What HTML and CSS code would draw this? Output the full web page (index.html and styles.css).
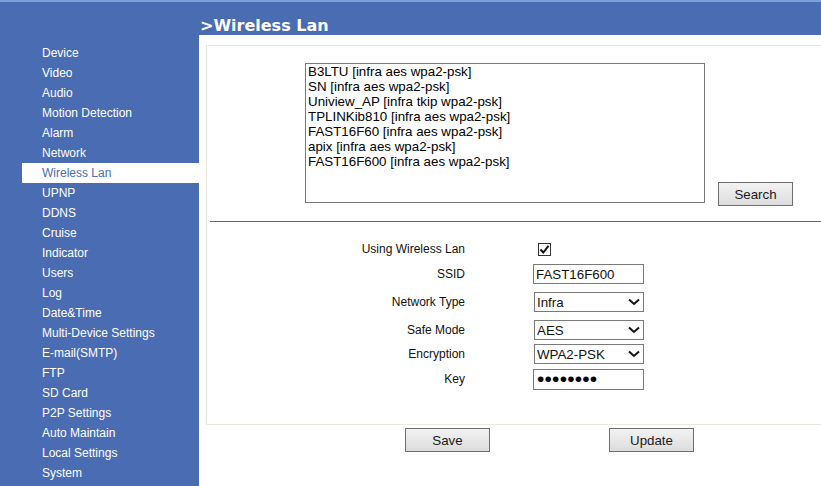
FILE: index.html
```html
<!DOCTYPE html>
<html lang="en">
<head>
<meta charset="utf-8">
<title>Wireless Lan</title>
<link rel="stylesheet" href="styles.css">
</head>
<body>
<div class="app">
  <header class="topbar">
    <h1 class="page-title">&gt;Wireless Lan</h1>
  </header>
  <div class="layout">
    <nav class="sidebar">
      <a class="nav-item">Device</a>
      <a class="nav-item">Video</a>
      <a class="nav-item">Audio</a>
      <a class="nav-item">Motion Detection</a>
      <a class="nav-item">Alarm</a>
      <a class="nav-item">Network</a>
      <a class="nav-item active">Wireless Lan</a>
      <a class="nav-item">UPNP</a>
      <a class="nav-item">DDNS</a>
      <a class="nav-item">Cruise</a>
      <a class="nav-item">Indicator</a>
      <a class="nav-item">Users</a>
      <a class="nav-item">Log</a>
      <a class="nav-item">Date&amp;Time</a>
      <a class="nav-item">Multi-Device Settings</a>
      <a class="nav-item">E-mail(SMTP)</a>
      <a class="nav-item">FTP</a>
      <a class="nav-item">SD Card</a>
      <a class="nav-item">P2P Settings</a>
      <a class="nav-item">Auto Maintain</a>
      <a class="nav-item">Local Settings</a>
      <a class="nav-item">System</a>
    </nav>
    <main class="content">
      <section class="panel">
        <div class="scan-row">
          <div class="ap-list">
            <div class="ap">B3LTU [infra aes wpa2-psk]</div>
            <div class="ap">SN [infra aes wpa2-psk]</div>
            <div class="ap">Uniview_AP [infra tkip wpa2-psk]</div>
            <div class="ap">TPLINKib810 [infra aes wpa2-psk]</div>
            <div class="ap">FAST16F60 [infra aes wpa2-psk]</div>
            <div class="ap">apix [infra aes wpa2-psk]</div>
            <div class="ap">FAST16F600 [infra aes wpa2-psk]</div>
          </div>
          <button class="btn btn-search">Search</button>
        </div>
        <hr class="divider">
        <div class="form">
          <div class="label">Using Wireless Lan</div>
          <div class="ctrl"><span class="check"><svg width="11" height="11" viewBox="0 0 11 11"><path d="M1.5 5.5 L4.3 8.5 L9.5 1.8" fill="none" stroke="#111" stroke-width="2"/></svg></span></div>

          <div class="label">SSID</div>
          <div class="ctrl"><input class="field" type="text" value="FAST16F600"></div>

          <div class="label">Network Type</div>
          <div class="ctrl"><div class="select-wrap"><select class="select"><option>Infra</option></select><svg class="chev" width="12" height="8" viewBox="0 0 12 8"><path d="M1 1.5 L6 6 L11 1.5" fill="none" stroke="#111" stroke-width="2"/></svg></div></div>

          <div class="label">Safe Mode</div>
          <div class="ctrl"><div class="select-wrap"><select class="select"><option>AES</option></select><svg class="chev" width="12" height="8" viewBox="0 0 12 8"><path d="M1 1.5 L6 6 L11 1.5" fill="none" stroke="#111" stroke-width="2"/></svg></div></div>

          <div class="label">Encryption</div>
          <div class="ctrl"><div class="select-wrap"><select class="select"><option>WPA2-PSK</option></select><svg class="chev" width="12" height="8" viewBox="0 0 12 8"><path d="M1 1.5 L6 6 L11 1.5" fill="none" stroke="#111" stroke-width="2"/></svg></div></div>

          <div class="label">Key</div>
          <div class="ctrl"><input class="field key" type="password" value="12345678"></div>
        </div>
      </section>
      <div class="actions">
        <button class="btn btn-action">Save</button>
        <button class="btn btn-action">Update</button>
      </div>
    </main>
  </div>
</div>
</body>
</html>
```

FILE: styles.css
```css
* { box-sizing: border-box; }

html, body {
  margin: 0;
  padding: 0;
  height: 100%;
  overflow: hidden;
  font-family: "Liberation Sans", Arial, sans-serif;
}

.app {
  display: flex;
  flex-direction: column;
  height: 100vh;
  background: #fff;
}

.topbar {
  height: 35px;
  flex: none;
  background: #4a6cb3;
  border-top: 2px solid #7e9ddb;
  display: flex;
  align-items: flex-end;
  padding-left: 200px;
}

.page-title {
  margin: 0;
  font-family: "DejaVu Sans", Verdana, sans-serif;
  font-weight: bold;
  font-size: 16px;
  line-height: 19px;
  color: #fff;
}

.layout {
  flex: 1;
  display: flex;
  min-height: 0;
}

.sidebar {
  width: 199px;
  flex: none;
  background: #4a6cb3;
  padding-top: 8px;
  display: flex;
  flex-direction: column;
}

.nav-item {
  display: block;
  height: 20px;
  line-height: 20px;
  margin-left: 22px;
  padding-left: 20px;
  font-size: 12px;
  color: #fff;
  white-space: nowrap;
}

.nav-item.active {
  background: #fff;
  color: #4a6cb3;
}

.content {
  flex: 1;
  min-width: 0;
  background: #fff;
  padding-top: 10px;
  padding-left: 7px;
}

.panel {
  border: 1px solid #ebe8d6;
  border-right: 0;
  height: 380px;
  display: flex;
  flex-direction: column;
}

.scan-row {
  display: flex;
  padding-left: 98px;
  padding-top: 17px;
}

.ap-list {
  width: 400px;
  height: 140px;
  border: 1px solid #7a7a7a;
  padding-left: 2px;
  font-size: 13.3333px;
  line-height: 15px;
  color: #000;
  background: #fff;
}

.btn {
  font-family: "Liberation Sans", Arial, sans-serif;
  font-size: 13.3333px;
  color: #1a1a1a;
  border: 1px solid #707070;
  border-radius: 0;
  background: linear-gradient(#f2f2f2, #dddddd);
  padding: 0;
}

.btn-search {
  width: 75px;
  height: 24px;
  margin-left: 13px;
  margin-top: 119px;
}

.divider {
  border: 0;
  border-top: 1px solid #52699e;
  margin: 15px 0 0 3px;
  height: 0;
}

.form {
  display: grid;
  grid-template-columns: 258px 1fr;
  grid-template-rows: 24px 26px 30px 26px 22px 28px;
  column-gap: 68px;
  margin-top: 15px;
  font-size: 12px;
  color: #111;
}

.label {
  display: flex;
  align-items: center;
  justify-content: flex-end;
  text-align: right;
}

.ctrl {
  display: flex;
  align-items: center;
}

.check {
  width: 13px;
  height: 13px;
  margin-left: 5px;
  border: 1px solid #333;
  display: flex;
  align-items: center;
  justify-content: center;
  background: #fff;
}

.field {
  width: 111px;
  height: 20px;
  border: 1px solid #7a7a7a;
  padding: 0 2px;
  font-family: "Liberation Sans", Arial, sans-serif;
  font-size: 13.3333px;
  color: #111;
  outline: none;
}

.field.key {
  height: 21px;
  padding: 0 3px;
  font-size: 21px;
  letter-spacing: 0.2px;
  color: #000;
}

.select-wrap {
  position: relative;
  margin-left: 1px;
  width: 110px;
  height: 20px;
}

.select {
  appearance: none;
  -webkit-appearance: none;
  width: 110px;
  height: 20px;
  border: 1px solid #7a7a7a;
  border-radius: 0;
  background: #fff;
  padding: 0 0 0 2px;
  font-family: "Liberation Sans", Arial, sans-serif;
  font-size: 13.3333px;
  color: #111;
}

.chev {
  position: absolute;
  right: 4px;
  top: 6px;
  pointer-events: none;
}

.actions {
  display: flex;
  padding-left: 199px;
  margin-top: 3px;
  gap: 119px;
}

.btn-action {
  width: 85px;
  height: 24px;
}
```
